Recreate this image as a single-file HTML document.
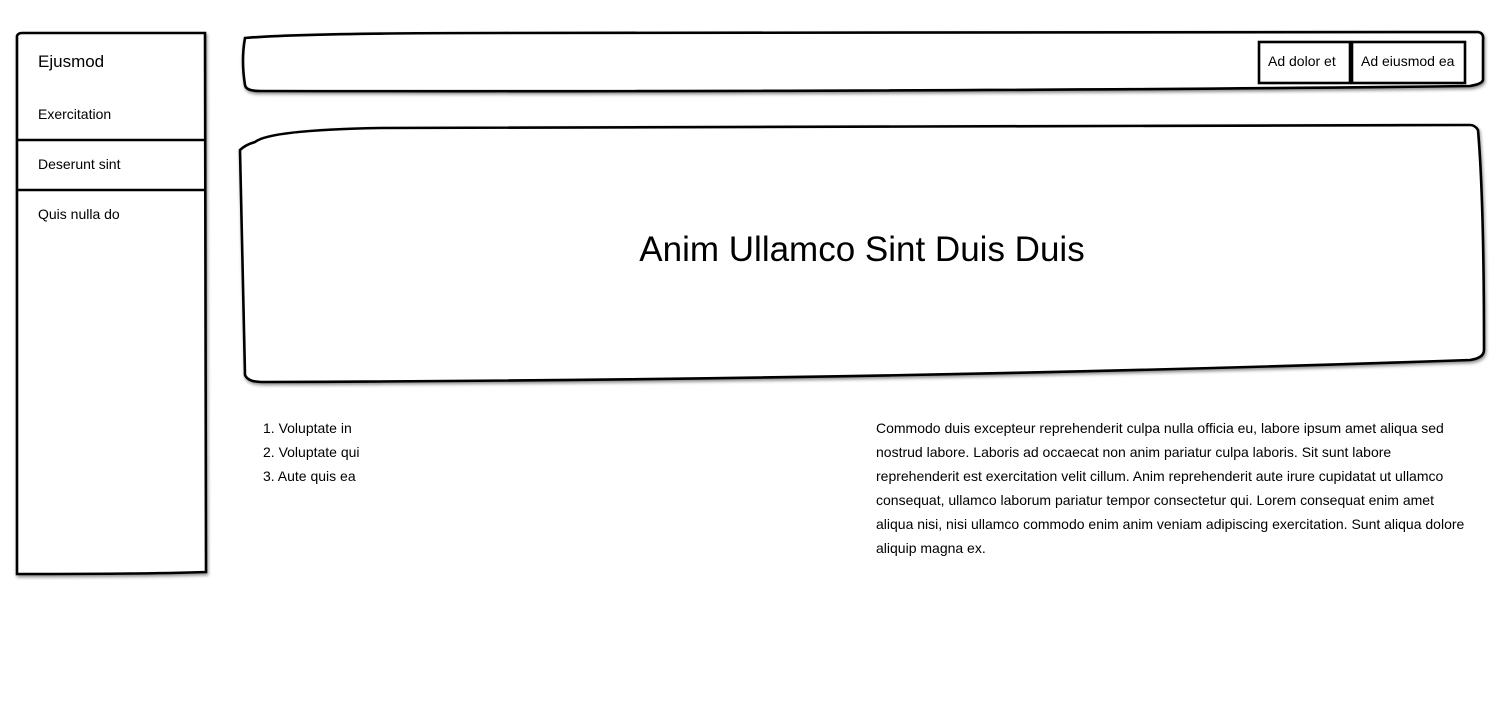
<!DOCTYPE html>
<html><head><meta charset="utf-8"><style>
body{margin:0;width:1500px;height:720px;background:#fff;font-family:"Liberation Sans",sans-serif;color:#000;position:relative;overflow:hidden}
svg.bg{position:absolute;left:0;top:0}
.t{position:absolute;white-space:nowrap}
</style></head><body>
<svg class="bg" width="1500" height="720">
<defs><filter id="sh" x="-5%" y="-5%" width="110%" height="110%"><feDropShadow dx="1" dy="2" stdDeviation="1.5" flood-opacity="0.45"/></filter></defs>
<g fill="none" stroke="#000" stroke-width="2.6" filter="url(#sh)">
<path d="M17 36 Q18 33 22 33 L205 33 L206 572 Q150 574 19 574 L17 574 Z" fill="#fff"/>
<path d="M245 38 Q300 33 500 33 L1478 32 Q1484 33 1483 40 L1483 80 Q1482 84 1470 86 Q1000 92 260 91 Q246 91 245 85 Q241 60 245 38 Z" fill="#fff"/>
<path d="M255 142 Q245 145 240 150 Q242 260 245 375 Q248 382 262 382 Q900 380 1470 360 Q1484 358 1484 350 Q1484 200 1478 130 Q1475 125 1470 125 Q800 126 380 128 Q270 130 255 142 Z" fill="#fff"/>
<rect x="1259" y="42" width="91" height="41" fill="#fff"/>
<rect x="1352" y="42" width="113" height="41" fill="#fff"/>
</g>
<g stroke="#000" stroke-width="2.4"><line x1="17" y1="140" x2="206" y2="140"/><line x1="17" y1="190" x2="206" y2="190"/></g>
</svg>
<div class="t" style="left:38px;top:52px;font-size:17px">Ejusmod</div>
<div class="t" style="left:38px;top:106px;font-size:14px">Exercitation</div>
<div class="t" style="left:38px;top:156px;font-size:14px">Deserunt sint</div>
<div class="t" style="left:38px;top:206px;font-size:14px">Quis nulla do</div>
<div class="t" style="left:1268px;top:53px;font-size:14px">Ad dolor et</div>
<div class="t" style="left:1361px;top:53px;font-size:14px">Ad eiusmod ea</div>
<div class="t" style="left:0;width:1724px;text-align:center;top:230px;font-size:35px">Anim Ullamco Sint Duis Duis</div>
<div class="t" style="left:263px;top:416px;font-size:14px;line-height:24px">1. Voluptate in<br>2. Voluptate qui<br>3. Aute quis ea</div>
<div class="t" style="left:876px;top:416px;font-size:14px;line-height:24px">Commodo duis excepteur reprehenderit culpa nulla officia eu, labore ipsum amet aliqua sed<br>nostrud labore. Laboris ad occaecat non anim pariatur culpa laboris. Sit sunt labore<br>reprehenderit est exercitation velit cillum. Anim reprehenderit aute irure cupidatat ut ullamco<br>consequat, ullamco laborum pariatur tempor consectetur qui. Lorem consequat enim amet<br>aliqua nisi, nisi ullamco commodo enim anim veniam adipiscing exercitation. Sunt aliqua dolore<br>aliquip magna ex.</div>
</body></html>
